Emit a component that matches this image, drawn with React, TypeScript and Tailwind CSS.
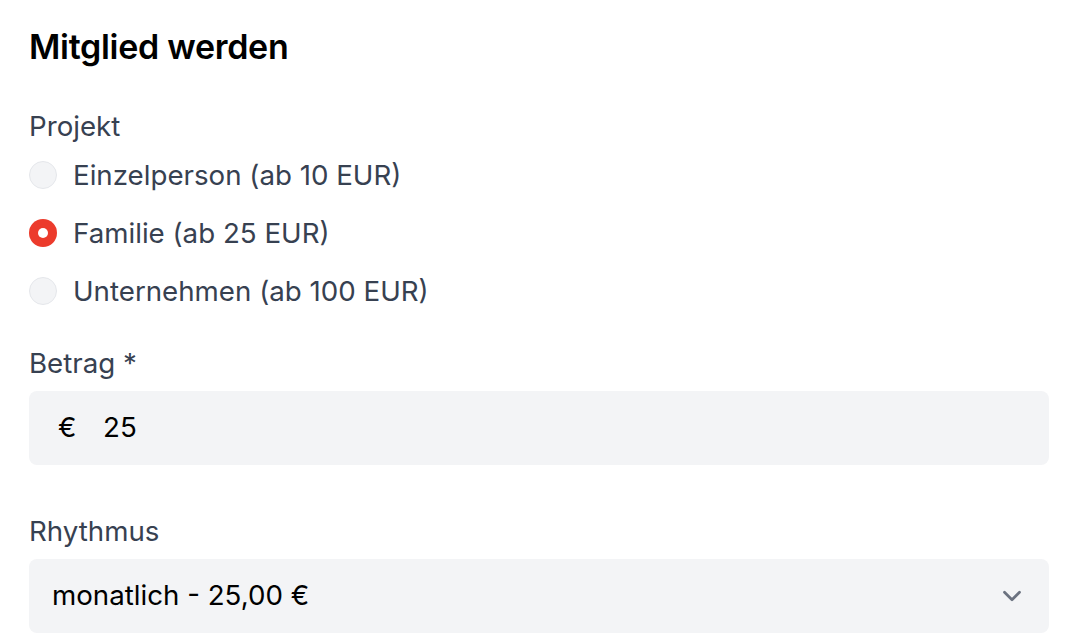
import { ChevronDown } from 'lucide-react'

const options = [
  { label: 'Einzelperson (ab 10 EUR)', checked: false },
  { label: 'Familie (ab 25 EUR)', checked: true },
  { label: 'Unternehmen (ab 100 EUR)', checked: false },
]

function Radio({ checked }: { checked: boolean }) {
  if (checked) {
    return (
      <span className="flex h-[28px] w-[28px] shrink-0 items-center justify-center rounded-full bg-[#ec3b2c]">
        <span className="h-[10px] w-[10px] rounded-full bg-white" />
      </span>
    )
  }
  return <span className="h-[28px] w-[28px] shrink-0 rounded-full border border-[#e5e7eb] bg-[#f3f4f6]" />
}

export default function App() {
  return (
    <div
      className="min-h-screen bg-white px-[29px] pt-[27px] text-[27.7px] text-[#374151]"
      style={{ fontFamily: 'Inter, "Noto Sans", sans-serif' }}
    >
      <h1 className="text-[34px] font-semibold leading-[40px] tracking-[-0.3px] text-black">Mitglied werden</h1>

      <div className="mt-[41px] leading-[36px]">Projekt</div>
      <div className="mt-[13px] flex flex-col gap-[22px]">
        {options.map((o) => (
          <label key={o.label} className="flex h-[36px] items-center gap-[16px]">
            <Radio checked={o.checked} />
            <span className="leading-[36px]">{o.label}</span>
          </label>
        ))}
      </div>

      <div className="mt-[36px] leading-[36px]">Betrag *</div>
      <div className="mt-[10px] flex h-[74px] items-center rounded-[8px] bg-[#f3f4f6] pl-[29px] text-black">
        <span className="w-[45px]">€</span>
        <span>25</span>
      </div>

      <div className="mt-[48px] leading-[36px]">Rhythmus</div>
      <div className="mt-[10px] flex h-[74px] items-center justify-between rounded-[8px] bg-[#f3f4f6] pl-[23px] pr-[22px] text-black">
        <span>monatlich - 25,00 €</span>
        <ChevronDown className="h-[30px] w-[30px] text-[#6b7280]" strokeWidth={2.2} />
      </div>
    </div>
  )
}
